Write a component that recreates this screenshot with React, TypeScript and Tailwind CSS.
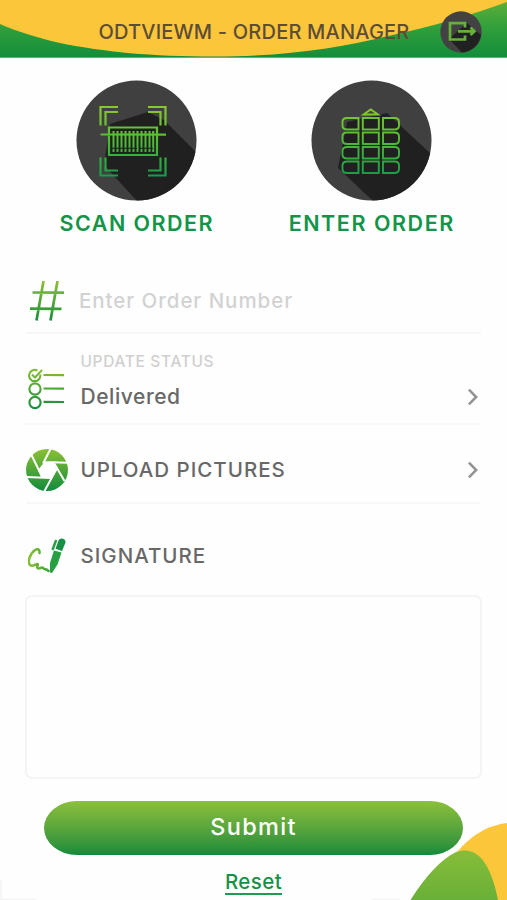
import type { ReactNode } from "react";

const SANS = "font-['Inter','Liberation_Sans',sans-serif]";

function Gradients() {
  return (
    <svg className="absolute h-0 w-0" aria-hidden="true">
      <defs>
        <linearGradient id="scanGreen" gradientUnits="userSpaceOnUse" x1="0" y1="25" x2="0" y2="97">
          <stop offset="0" stopColor="#8cc832" />
          <stop offset="0.45" stopColor="#55be34" />
          <stop offset="1" stopColor="#159c4a" />
        </linearGradient>
        <linearGradient id="rowGreen" gradientUnits="userSpaceOnUse" x1="0" y1="0" x2="0" y2="42">
          <stop offset="0" stopColor="#8bc034" />
          <stop offset="1" stopColor="#128c3c" />
        </linearGradient>
        <linearGradient id="penGreen" gradientUnits="userSpaceOnUse" x1="2" y1="0" x2="26" y2="0">
          <stop offset="0" stopColor="#86bd36" />
          <stop offset="1" stopColor="#259c3c" />
        </linearGradient>
        <linearGradient id="bannerGreen" x1="0" y1="0" x2="0" y2="1">
          <stop offset="0" stopColor="#5fb038" />
          <stop offset="0.45" stopColor="#32a03c" />
          <stop offset="1" stopColor="#128c3c" />
        </linearGradient>
        <linearGradient id="leafGreen" x1="0" y1="0" x2="0" y2="1">
          <stop offset="0" stopColor="#87bd39" />
          <stop offset="1" stopColor="#69b038" />
        </linearGradient>
        <clipPath id="disc"><circle cx="60.5" cy="60.5" r="60" /></clipPath>
      </defs>
    </svg>
  );
}

function Header() {
  return (
    <header className="relative h-[58px] shrink-0">
      <svg className="absolute inset-0" width="507" height="58" viewBox="0 0 507 58">
        <rect width="507" height="58" fill="url(#bannerGreen)" />
        <path d="M0 0H507V2C472 15 430 27 388 36C340 48 285 56.500 215 56.500C150 56.500 105 52 60 43C40 38.500 18 32 0 24Z" fill="#fcc63a" />
        <path d="M0 57.600H507" stroke="#79c291" strokeWidth="0.800" />
      </svg>
      <div className="relative flex h-full items-center">
        <h1 className="ml-[98.500px] mt-[6px] w-[341.500px] whitespace-nowrap text-[20px] font-medium leading-6 tracking-[0.200px] text-[#5d4d36]">ODTVIEWM - ORDER MANAGER</h1>
        <button aria-label="Log out" className="mt-[5px]">
          <svg width="42" height="42" viewBox="0 0 42 42" fill="none">
            <circle cx="21" cy="21" r="20.700" fill="#434242" />
            <path d="M9 28L27 12L34 18L41 24A20.700 20.700 0 0 1 22 41.500Z" fill="#212121" />
            <path d="M25 16.500V12.200H10V28.500H25V24.500M18 20.300H34M30.500 16.500L34.500 20.300L30.500 24.100" stroke="#65b13a" strokeWidth="2.700" />
          </svg>
        </button>
      </div>
    </header>
  );
}

function ScanIcon() {
  return (
    <svg width="121" height="121" viewBox="0 0 121 121" fill="none">
      <circle cx="60.500" cy="60.500" r="60" fill="#414040" />
      <path clipPath="url(#disc)" d="M34 44L72 32L88 40L121 73V121H61L28 85Z" fill="#202020" />
      <g stroke="url(#scanGreen)" strokeWidth="2.200">
        <path d="M24.500 45.500V27H42M29.500 45.500V32H42M72 27H89.500V45.500M72 32H84.500V45.500M24.500 77.500V95.500H42M29.500 77.500V90.500H42M72 95.500H89.500V77.500M72 90.500H84.500V77.500" />
        <path d="M33 47.500H81V75H33ZM24.500 54.500L90 54.600" />
        <path d="M37.500 51V72M41.500 51V72M45.500 51V72M49.500 51V72M53.500 51V72M57.500 51V72M61.500 51V72M65.500 51V72M69.500 51V72M73.500 51V72M77.200 51V72" strokeWidth="2" />
      </g>
      <path d="M36 68.300H79" stroke="#202020" strokeWidth="1" strokeDasharray="25 3 13 2" />
    </svg>
  );
}

function KeypadIcon() {
  return (
    <svg width="121" height="121" viewBox="0 0 121 121" fill="none">
      <circle cx="60.500" cy="60.500" r="60" fill="#414040" />
      <path clipPath="url(#disc)" d="M36 42L76 33L121 75V121H62L27 88Z" fill="#202020" />
      <g stroke="url(#scanGreen)" strokeWidth="1.900">
        <path d="M52.500 34.500L59.700 29.500L67 34.500Z" />
        {[38, 52.5, 67, 81.5].map((y) => (
          <g key={y}>
            <path d={`M47.500 ${y}V${y + 11.5}H36Q31.500 ${y + 11.5} 31.500 ${y + 7.5}V${y + 4}Q31.500 ${y} 36 ${y}Z`} />
            <rect x="51.800" y={y} width="16" height="11.500" />
            <path d={`M72 ${y}V${y + 11.5}H83.500Q88 ${y + 11.5} 88 ${y + 7.5}V${y + 4}Q88 ${y} 83.500 ${y}Z`} />
          </g>
        ))}
      </g>
    </svg>
  );
}

function HashIcon() {
  return (
    <svg width="36" height="42" viewBox="0 0 36 42" fill="none">
      <path d="M13.500 0L6.500 39.500M27.500 0L20.500 39.500M2.500 11.500L34 11.600M0 27.700L31.500 27.800" stroke="url(#rowGreen)" strokeWidth="2.700" />
    </svg>
  );
}

function ChecklistIcon() {
  return (
    <svg width="37" height="42" viewBox="0 0 37 42" fill="none" stroke="url(#rowGreen)" strokeWidth="2.100">
      <path d="M12.200 6.500A5.600 5.600 0 1 1 9.500 2.700M4 6.500L7 9.500L14 2" />
      <circle cx="7" cy="21" r="5.600" />
      <circle cx="7" cy="34.500" r="5.600" />
      <path d="M15.500 7L36 7.100M15.500 20.500L36 20.600M15.500 33.900L36 34" />
    </svg>
  );
}

function ApertureIcon() {
  return (
    <svg width="42" height="42" viewBox="0 0 42 42" fill="none">
      <circle cx="21" cy="21" r="21" fill="url(#rowGreen)" />
      <path d="M18 13.500H28L30.500 21L25.500 29H15.500L12 21Z" fill="white" />
      <path d="M24.500 0L17 14.500M42 13.800L18 13M38.500 32L28 14M18.500 42L30.500 20M0 28L25.500 29M5.500 6L16.500 28.500" stroke="white" strokeWidth="2" />
    </svg>
  );
}

function SignatureIcon() {
  return (
    <svg width="38" height="36" viewBox="0 0 38 36" fill="none">
      <path d="M11.500 15C12 11 9.500 10.500 7 12C1.500 16 -0.500 24 2 27C5 29.500 8 25.500 9.500 26C11 27 8 29 9.500 30C11.500 31.500 13.500 28.500 15 30C16 32 18.500 30.500 20.500 33" stroke="url(#penGreen)" strokeWidth="2.500" strokeLinecap="round" strokeLinejoin="round" />
      <path d="M26 12.500L33.500 14.500L29.500 26.500L24 35L22 34.500V25Z" fill="#27a044" />
      <path d="M30.500 2.500C32 -1 38 0 37.500 4.500L34 13L27.500 10.800Z" fill="#159044" />
      <path d="M27.800 3L24.800 11" stroke="#27a044" strokeWidth="2.500" strokeLinecap="round" />
    </svg>
  );
}

function Chevron() {
  return (
    <svg className="ml-auto mr-[3px]" width="10" height="18" viewBox="0 0 10 18" fill="none">
      <path d="M0.900 1.700L8.200 9L0.900 16.300" stroke="#929292" strokeWidth="2.500" />
    </svg>
  );
}

function Action({ icon, label, spacing }: { icon: ReactNode; label: string; spacing: string }) {
  return (
    <button className="flex w-[180px] flex-col items-center">
      {icon}
      <span className={`mt-[8.500px] whitespace-nowrap text-[21.500px] font-semibold leading-7 text-[#129548] ${spacing}`}>{label}</span>
    </button>
  );
}

export default function App() {
  return (
    <main className={`relative flex h-[900px] w-[507px] flex-col overflow-hidden bg-[#fefefe] ${SANS}`}>
      <Gradients />
      <Header />
      <section className="flex h-[213px] shrink-0 justify-between pl-[46px] pr-[46px] pt-[21.500px]">
        <Action icon={<ScanIcon />} label="SCAN ORDER" spacing="pl-[1.500px] tracking-[1.450px]" />
        <Action icon={<KeypadIcon />} label="ENTER ORDER" spacing="pl-[1.500px] tracking-[1.550px]" />
      </section>

      <section className="mx-[26px] flex shrink-0 flex-col">
        <label className="flex h-[63px] items-center border-b-2 border-[#f6f6f6]">
          <span className="ml-[3.500px] w-[49.500px]"><HashIcon /></span>
          <input aria-label="Order number" placeholder="Enter Order Number" className="w-[300px] bg-transparent text-[20.500px] font-medium tracking-[0.950px] outline-none placeholder:text-[#d2d2d2]" />
        </label>
        <div className="flex h-[91px] items-center border-b-2 border-[#f8f8f8]">
          <span className="ml-[2px] mt-[21px] w-[52.500px]"><ChecklistIcon /></span>
          <div className="flex flex-col self-start pt-[18px]">
            <span className="text-[15.500px] font-medium leading-5 tracking-[0.650px] text-[#d0d0d0]">UPDATE STATUS</span>
            <span className="mt-[13px] text-[21px] font-medium leading-6 tracking-[0.550px] text-[#686868]">Delivered</span>
          </div>
          <div className="ml-auto mt-[37px]"><Chevron /></div>
        </div>
        <button className="flex h-[79px] items-center border-b-2 border-[#f8f8f8] pt-[13px]">
          <span className="w-[54.500px]"><ApertureIcon /></span>
          <span className="text-[20.500px] font-medium tracking-[1px] text-[#686868]">UPLOAD PICTURES</span>
          <span className="ml-auto"><Chevron /></span>
        </button>
        <div className="flex h-[91px] items-center pt-[13px]">
          <span className="ml-[2px] w-[52.500px]"><SignatureIcon /></span>
          <span className="text-[20.500px] font-medium tracking-[1px] text-[#686868]">SIGNATURE</span>
        </div>
      </section>

      <div className="mx-[25px] h-[184px] shrink-0 rounded-[7px] border-2 border-[#f4f4f4]" />
      <div className="mt-[22px] flex flex-col items-center">
        <button className="h-[54px] w-[419px] rounded-[33px/27px] bg-linear-to-b from-[#8bc03b] to-[#0e8b3b] pb-[2px] text-[23.500px] font-medium tracking-[1.300px] text-white">Submit</button>
        <button className="mt-[15px] h-[25px] border-b-2 border-[#239a51] text-[20.500px] font-medium leading-6 tracking-[0.400px] text-[#169146]">Reset</button>
      </div>

      <svg className="absolute bottom-0 right-0" width="100" height="80" viewBox="0 0 100 80">
        <path d="M49 33C67 13 80 6 100 3V80H60Z" fill="#fcc63a" />
        <path d="M3.500 80C18 57 34 39 49 32C57 29 66 30 73 37C81 45 87 60 91 80Z" fill="url(#leafGreen)" />
      </svg>
      <svg className="absolute bottom-0 left-0" width="402" height="20" viewBox="0 0 402 20">
        <path d="M1 0V19.500H36M372 19.500H400" fill="none" stroke="#f3f3f3" strokeWidth="1.500" />
      </svg>
    </main>
  );
}
